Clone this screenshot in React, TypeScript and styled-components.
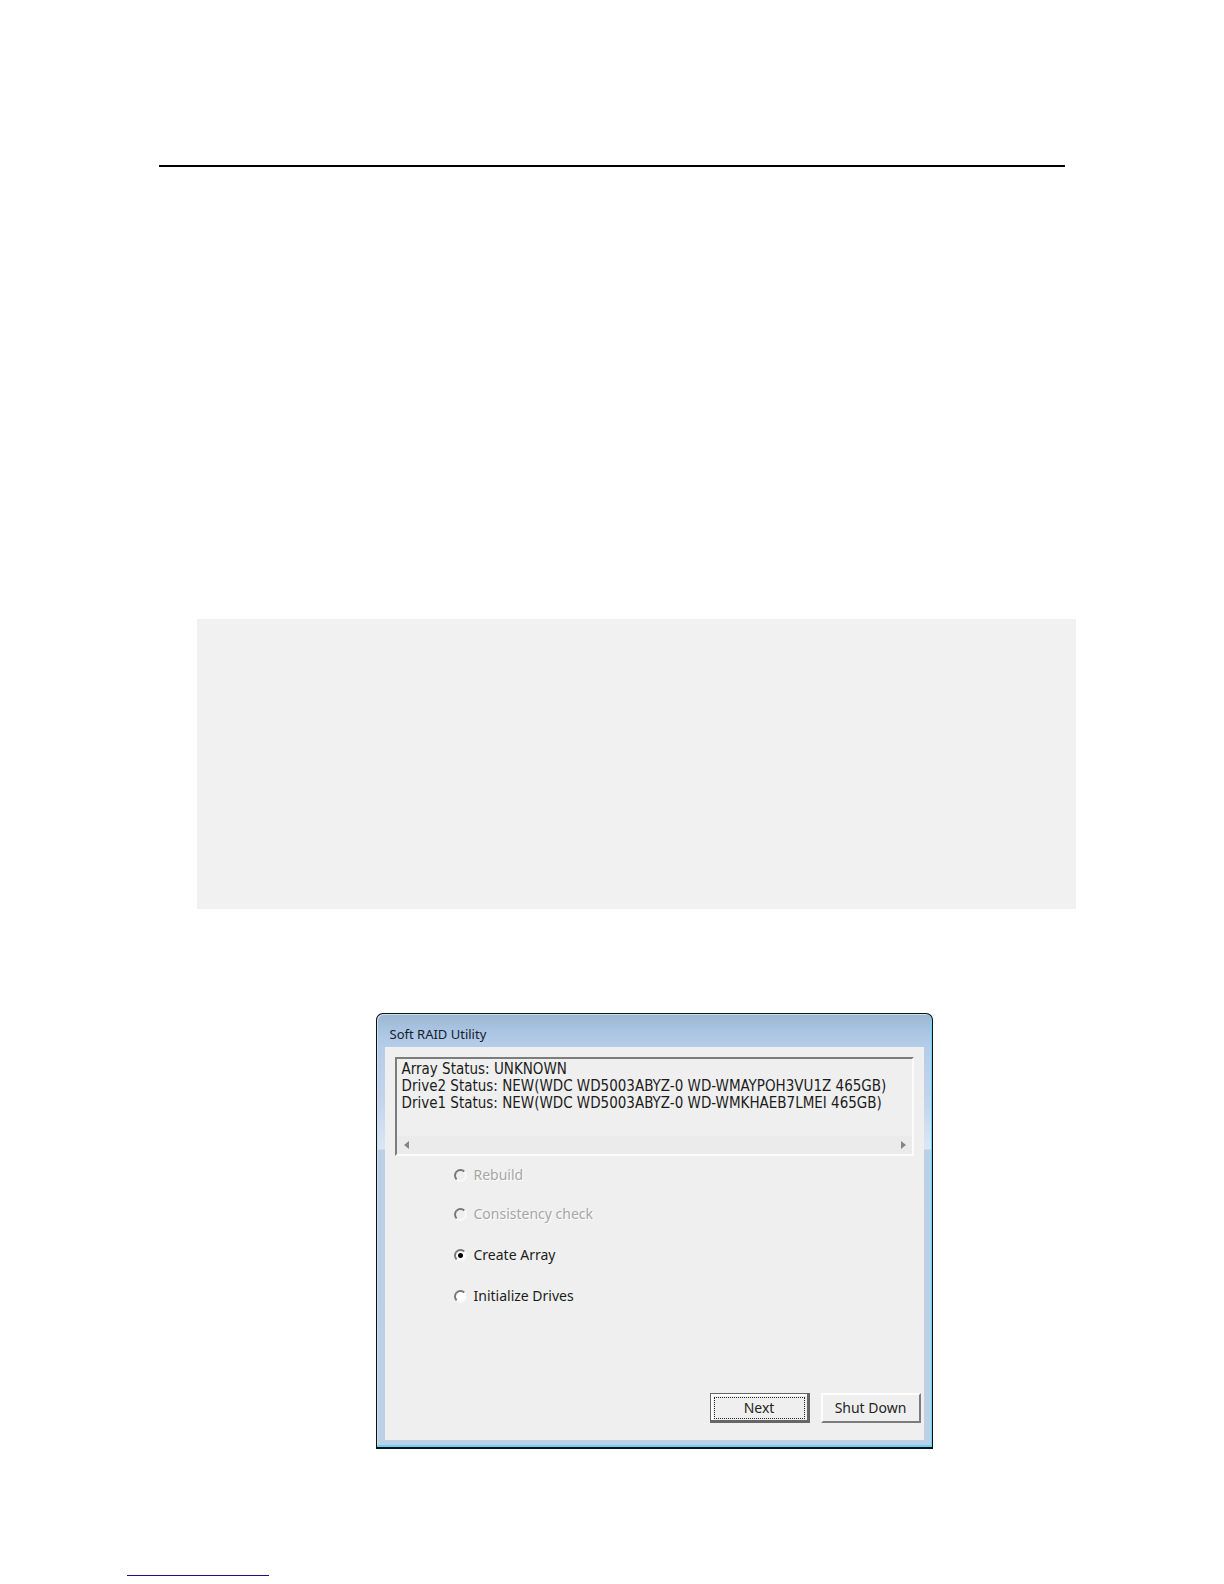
import React, { useState } from "react";
import styled, { createGlobalStyle, css } from "styled-components";

const GlobalStyle = createGlobalStyle`
  *, *::before, *::after { box-sizing: border-box; }
  body { margin: 0; background: #ffffff; }
`;

const uiFont = `"Noto Sans", "Open Sans", Verdana, sans-serif`;
const statusFont = `"DejaVu Sans Condensed", "DejaVu Sans", Verdana, sans-serif`;

const Page = styled.div`
  display: flex;
  flex-direction: column;
  padding-top: 165px;
  font-family: ${uiFont};
  color: #1c1c1c;
`;

const Content = styled.main`
  display: flex;
  flex-direction: column;
  padding: 0 13%;
`;

const HeaderRule = styled.hr`
  width: 100%;
  height: 2px;
  margin: 0;
  border: 0;
  background: #000000;
`;

const ShadedPanel = styled.section`
  min-height: 290px;
  margin: 452px -11px 0 38px;
  background: #f1f1f1;
`;

const Dialog = styled.form`
  display: flex;
  flex-direction: column;
  align-self: center;
  width: 100%;
  max-width: 557px;
  margin: 104px 0 0 84px;
  padding: 0 8px 7px 8px;
  border: 1px solid #0b1116;
  border-bottom-width: 2px;
  border-radius: 7px 7px 0 0;
  background:
    linear-gradient(to bottom, #9bb7d0 0, #a9c4e2 16px, #b5cde9 34px, #c4d5ec 90px, #dbe7f5 135px, #bad0e6 136px, #bdd1e6 100%);
  box-shadow: inset -1px -2px 0 #63d6f3, inset 1px 1px 0 #cfdfec;
`;

const TitleBar = styled.h1`
  margin: 0;
  padding: 11px 5px 3px;
  font: 400 13px/19px ${uiFont};
  color: #17202c;
`;

const Client = styled.div`
  display: flex;
  flex-direction: column;
  padding: 10px 3px 17px 10px;
  background: #efefef;
`;

const StatusBox = styled.div`
  display: flex;
  flex-direction: column;
  justify-content: space-between;
  height: 99px;
  margin-right: 7px;
  border: 2px solid;
  border-color: #7d7d7d #fbfbfb #fbfbfb #7d7d7d;
`;

const StatusList = styled.ul`
  margin: 0;
  padding: 2px 5px;
  list-style: none;
  font-family: ${statusFont};
  font-size: 15px;
  line-height: 17px;
  white-space: nowrap;
`;

const ScrollTrack = styled.div`
  display: flex;
  align-items: center;
  justify-content: space-between;
  height: 18px;
  padding: 0 6px 0 7px;
  background: #ebebeb;
`;

const Arrow = styled.svg`
  display: block;
  width: 5px;
  height: 8px;
  fill: #858585;
`;

const Options = styled.fieldset`
  display: flex;
  flex-direction: column;
  gap: 21px;
  margin: 0;
  padding: 10px 0 0 59px;
  border: 0;
`;

const Option = styled.label<{ $disabled?: boolean; $spaced?: boolean }>`
  display: flex;
  align-items: center;
  gap: 7px;
  padding-top: ${(p) => (p.$spaced ? "2px" : "0")};
  font-size: 14px;
  line-height: 18px;
  ${(p) =>
    p.$disabled &&
    css`
      color: #a6a6a6;
      text-shadow: 1px 1px 0 #ffffff;
    `}
`;

const Radio = styled.input`
  appearance: none;
  width: 13px;
  height: 13px;
  margin: 0;
  border: 2px solid;
  border-color: #777777 #f8f8f8 #f8f8f8 #777777;
  border-radius: 50%;
  background: #ffffff;
  &:disabled { background: #efefef; }
  &:checked { background: radial-gradient(circle, #000000 2px, #ffffff 3px); }
`;

const Actions = styled.div`
  display: flex;
  justify-content: flex-end;
  gap: 11px;
  margin-top: 88px;
`;

const Button = styled.button<{ $primary?: boolean }>`
  width: 100px;
  height: 30px;
  padding: ${(p) => (p.$primary ? "3px 2px 2px 3px" : "0")};
  border: 2px solid;
  border-color: #fdfdfd #7c7c7c #7c7c7c #fdfdfd;
  background: #efefef;
  font-family: inherit;
  font-size: 14px;
  line-height: 20px;
  color: #242424;
  ${(p) =>
    p.$primary &&
    css`
      border-width: 1px 3px 3px 1px;
      border-color: #666666;
      box-shadow: inset 2px 2px 0 #ffffff;
    `}
`;

const FocusFrame = styled.span`
  display: block;
  border: 1px dotted #222222;
`;

const Footer = styled.footer`
  display: flex;
  padding: 126px 127px 8px;
`;

const FooterRule = styled.hr`
  width: 142px;
  height: 1px;
  margin: 0;
  border: 0;
  background: #17127c;
`;

const statusLines = [
  "Array Status: UNKNOWN",
  "Drive2 Status: NEW(WDC WD5003ABYZ-0 WD-WMAYPOH3VU1Z 465GB)",
  "Drive1 Status: NEW(WDC WD5003ABYZ-0 WD-WMKHAEB7LMEI 465GB)",
];

const options = [
  { id: "rebuild", label: "Rebuild", disabled: true },
  { id: "consistency", label: "Consistency check", disabled: true },
  { id: "create", label: "Create Array", spaced: true },
  { id: "initialize", label: "Initialize Drives", spaced: true },
];

export default function App() {
  const [task, setTask] = useState("create");
  return (
    <Page>
      <GlobalStyle />
      <Content>
        <HeaderRule />
        <ShadedPanel />
        <Dialog onSubmit={(e: React.FormEvent) => e.preventDefault()}>
          <TitleBar>Soft RAID Utility</TitleBar>
          <Client>
            <StatusBox>
              <StatusList>
                {statusLines.map((line) => (
                  <li key={line}>{line}</li>
                ))}
              </StatusList>
              <ScrollTrack>
                <Arrow viewBox="0 0 5 8"><path d="M5 0v8L0 4z" /></Arrow>
                <Arrow viewBox="0 0 5 8"><path d="M0 0v8l5-4z" /></Arrow>
              </ScrollTrack>
            </StatusBox>
            <Options>
              {options.map((o) => (
                <Option key={o.id} htmlFor={o.id} $disabled={o.disabled} $spaced={o.spaced}>
                  <Radio
                    type="radio"
                    name="task"
                    id={o.id}
                    disabled={o.disabled}
                    checked={task === o.id}
                    onChange={() => setTask(o.id)}
                  />
                  {o.label}
                </Option>
              ))}
            </Options>
            <Actions>
              <Button type="submit" $primary><FocusFrame>Next</FocusFrame></Button>
              <Button type="button">Shut Down</Button>
            </Actions>
          </Client>
        </Dialog>
      </Content>
      <Footer><FooterRule /></Footer>
    </Page>
  );
}
